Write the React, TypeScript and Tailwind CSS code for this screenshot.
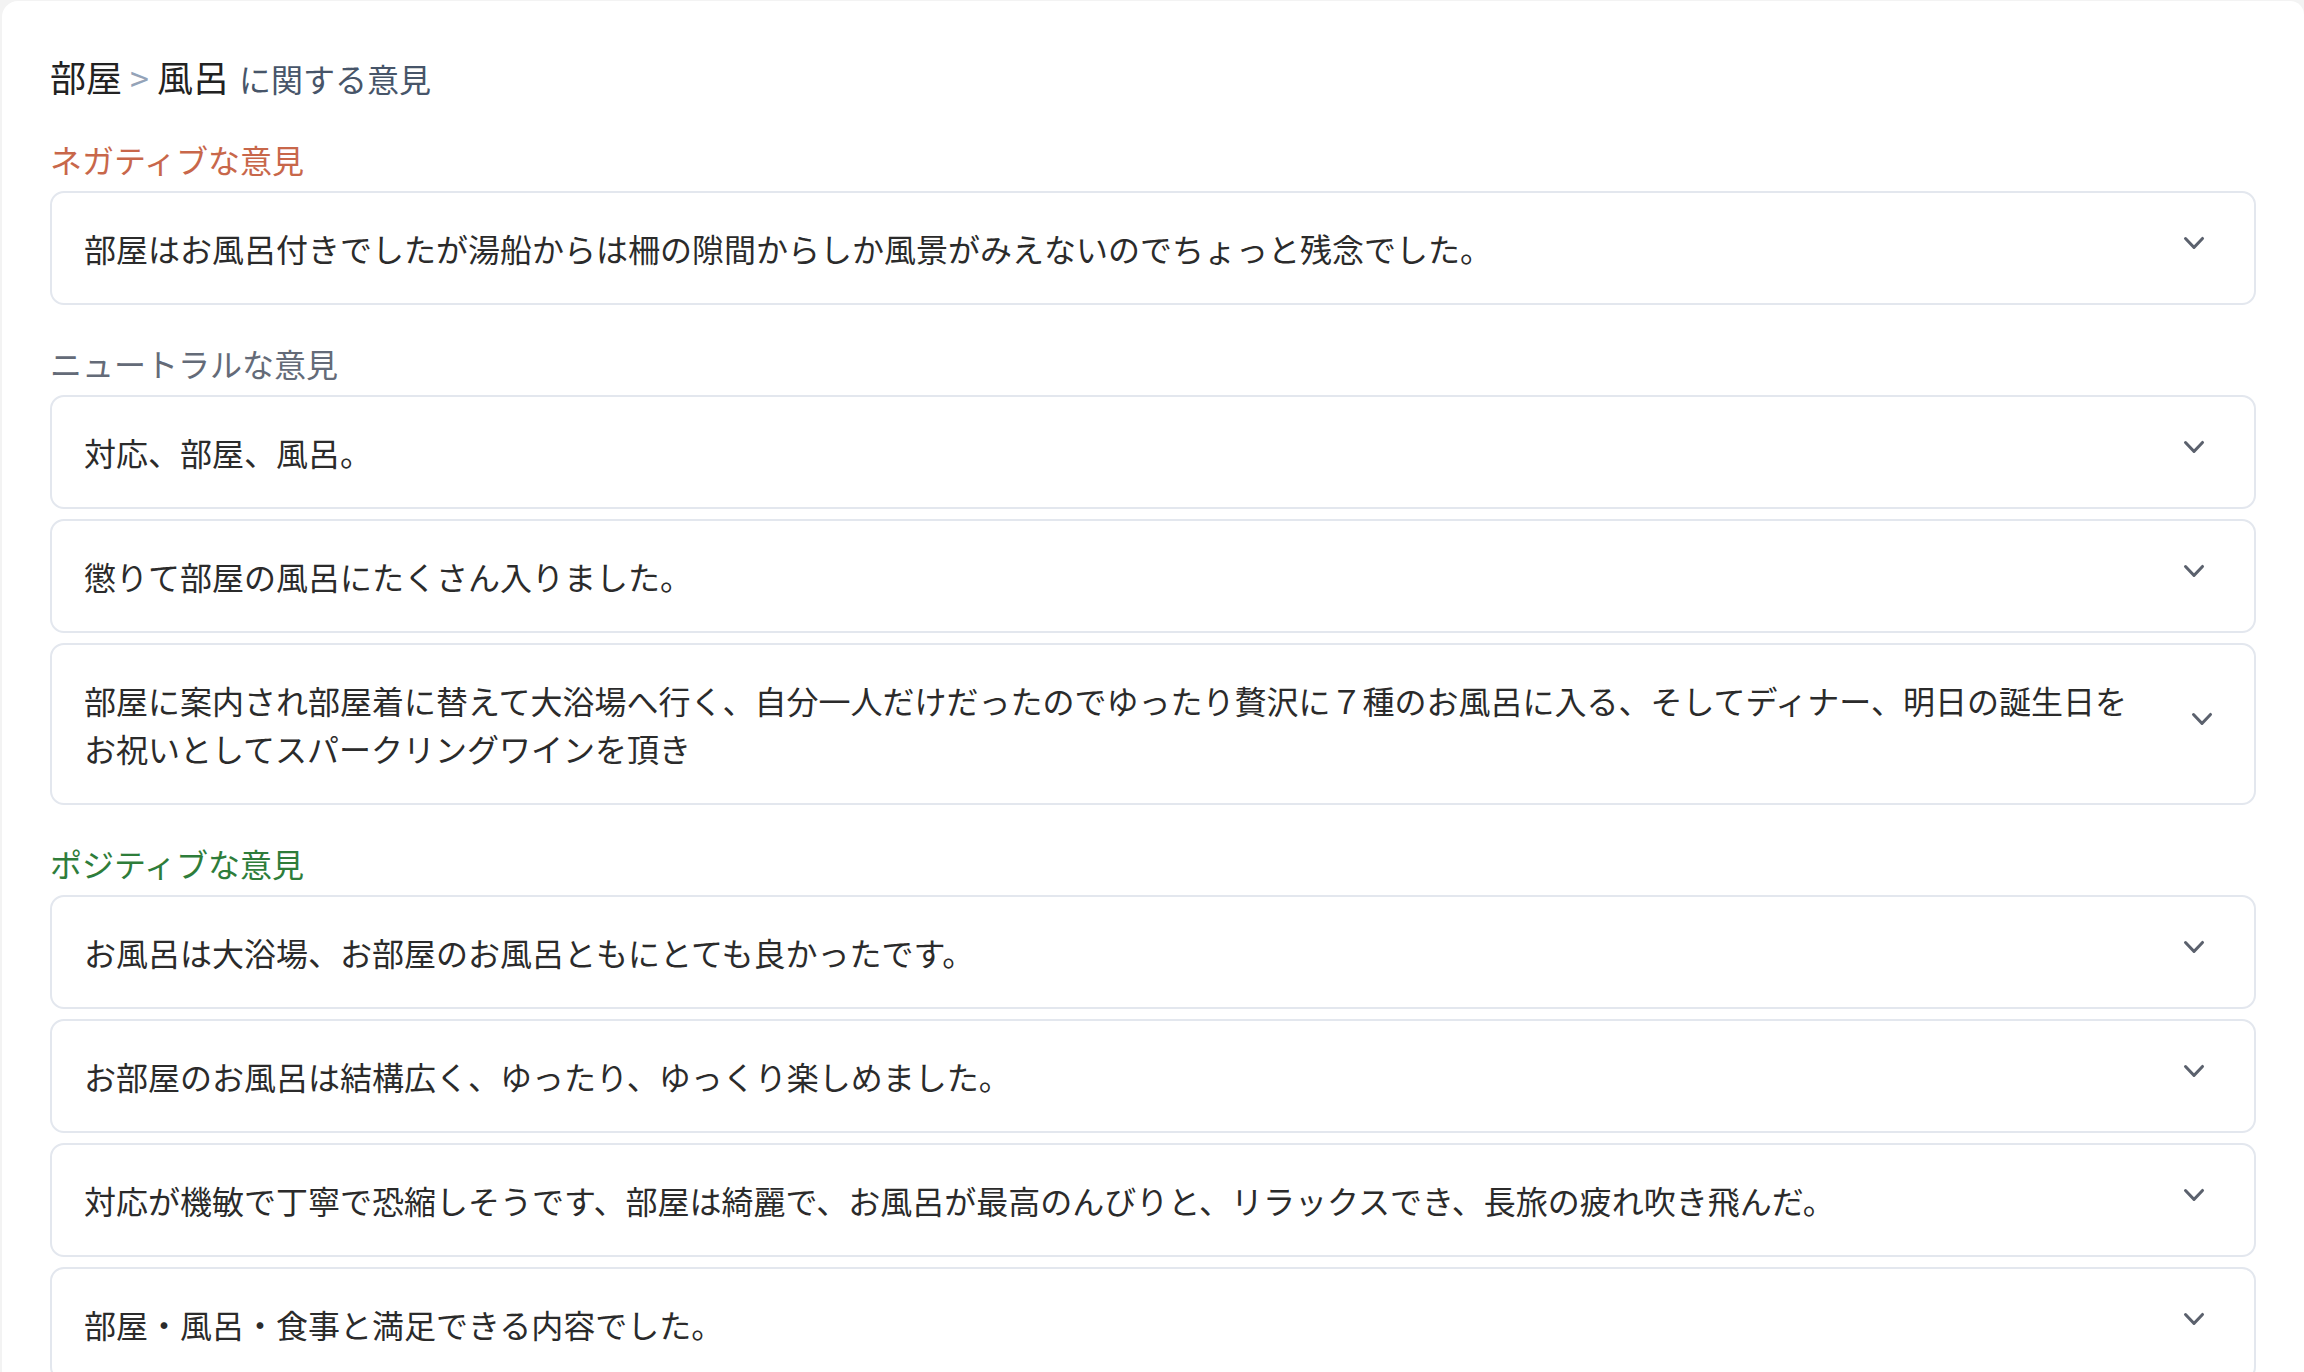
const sections = [
  {
    label: "ネガティブな意見",
    color: "text-[#c8674a]",
    items: [
      "部屋はお風呂付きでしたが湯船からは柵の隙間からしか風景がみえないのでちょっと残念でした。",
    ],
  },
  {
    label: "ニュートラルな意見",
    color: "text-[#646b78]",
    items: [
      "対応、部屋、風呂。",
      "懲りて部屋の風呂にたくさん入りました。",
      "部屋に案内され部屋着に替えて大浴場へ行く、自分一人だけだったのでゆったり贅沢に７種のお風呂に入る、そしてディナー、明日の誕生日をお祝いとしてスパークリングワインを頂き",
    ],
  },
  {
    label: "ポジティブな意見",
    color: "text-[#2e7d3a]",
    items: [
      "お風呂は大浴場、お部屋のお風呂ともにとても良かったです。",
      "お部屋のお風呂は結構広く、ゆったり、ゆっくり楽しめました。",
      "対応が機敏で丁寧で恐縮しそうです、部屋は綺麗で、お風呂が最高のんびりと、リラックスでき、長旅の疲れ吹き飛んだ。",
      "部屋・風呂・食事と満足できる内容でした。",
    ],
  },
];

function Chevron() {
  return (
    <svg className="size-10 shrink-0 text-[#5b616d]" viewBox="0 0 20 20" fill="currentColor" aria-hidden="true">
      <path
        fillRule="evenodd"
        d="M5.23 7.21a.75.75 0 011.06.02L10 11.168l3.71-3.938a.75.75 0 111.08 1.04l-4.25 4.5a.75.75 0 01-1.08 0l-4.25-4.5a.75.75 0 01.02-1.06z"
        clipRule="evenodd"
      />
    </svg>
  );
}

function OpinionItem({ text }: { text: string }) {
  return (
    <button
      type="button"
      className="flex w-full items-center justify-between rounded-[14px] border-2 border-[#e3e7ee] bg-white px-8 py-[31px] text-left"
    >
      <span className="text-[32px] leading-[48px] text-[#2b2b2b]">{text}</span>
      <span className="ml-6 flex w-14 shrink-[10] -translate-y-[5px] justify-center">
        <Chevron />
      </span>
    </button>
  );
}

export default function App() {
  return (
    <div
      className="h-[1372px] overflow-hidden bg-[#f3f3f3] pl-[2px] pt-[1px]"
      style={{ fontFamily: '"Noto Sans CJK JP", "Noto Sans", sans-serif' }}
    >
      <div className="min-h-[1400px] rounded-tl-2xl rounded-tr-[14px] bg-white px-12 pt-[47px]">
        <h1 className="mb-[29px] flex items-baseline leading-[56px]">
          <span className="text-[36px] text-[#222]">部屋</span>
          <span className="mx-[8px] text-[34px] text-[#94a3b8]">&gt;</span>
          <span className="text-[36px] text-[#222]">風呂</span>
          <span className="ml-[10px] text-[32px] text-[#475569]">に関する意見</span>
        </h1>

        <div className="flex flex-col gap-[34px]">
          {sections.map((section) => (
            <section key={section.label}>
              <h2 className={`mb-2 text-[32px] leading-[48px] ${section.color}`}>{section.label}</h2>
              <div className="flex flex-col gap-[10px]">
                {section.items.map((item) => (
                  <OpinionItem key={item} text={item} />
                ))}
              </div>
            </section>
          ))}
        </div>
      </div>
    </div>
  );
}
